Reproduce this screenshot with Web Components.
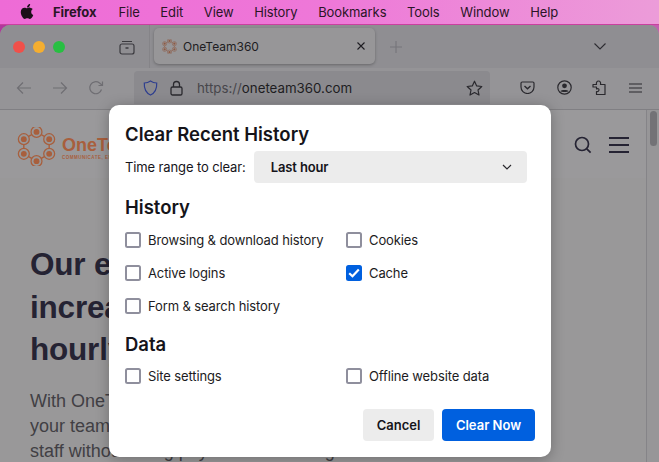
<!DOCTYPE html>
<html>
<head>
<meta charset="utf-8">
<title>Clear Recent History</title>
<style>
html, body { margin: 0; height: 100%; overflow: hidden; }
body {
    width: 659px; height: 462px;
    display: flex; flex-direction: column;
    font-family: Inter, "Liberation Sans", sans-serif;
    background: linear-gradient(90deg, #b0389c, #c25fb0);
}
</style>
</head>
<body>
<mac-menubar></mac-menubar>
<browser-window>
    <tab-strip></tab-strip>
    <nav-toolbar></nav-toolbar>
    <page-view></page-view>
    <history-dialog></history-dialog>
</browser-window>

<script>
const hexLogo = (size, color) => `
    <svg width="${size}" height="${size}" viewBox="0 0 40 40" fill="none">
        <path d="M20 5 L33 12.5 V27.5 L20 35 L7 27.5 V12.5 Z" stroke="${color}" stroke-width="1.4"/>
        ${[[20, 5], [33, 12.5], [33, 27.5], [20, 35], [7, 27.5], [7, 12.5]].map(([x, y]) => `
            <circle cx="${x}" cy="${y}" r="5.6" fill="#999899" stroke="${color}" stroke-width="1.3"/>
            <circle cx="${x}" cy="${y}" r="3" fill="${color}"/>`).join('')}
    </svg>`

class MacMenubar extends HTMLElement {
    constructor() {
        super()
        this.attachShadow({ mode: 'open' })
        this.shadowRoot.innerHTML = `
            <style>
                :host {
                    display: flex; align-items: center; flex: none;
                    height: 25px; padding-left: 20px; box-sizing: border-box;
                    border-bottom: 1px solid #c9409f;
                    background: linear-gradient(90deg, #ee6bd6, #ee78d8 50%, #ec9cd9);
                    color: #2a1526; font-size: 13px; letter-spacing: -.08px;
                }
                svg { width: 14px; height: 17px; margin-right: 19px; margin-top: -2px; }
                b { font-weight: 700; margin-right: 22px; }
                span { margin-right: 20.6px; }
            </style>
            <svg viewBox="0 0 384 512"><path fill="#1a0f18" d="M318.7 268.7c-.2-36.7 16.4-64.4 50-84.8-18.8-26.9-47.2-41.7-84.7-44.6-35.5-2.8-74.3 20.7-88.5 20.7-15 0-49.4-19.7-76.4-19.7C63.3 141.2 4 184.8 4 273.5q0 39.3 14.4 81.2c12.8 36.7 59 126.7 107.2 125.2 25.2-.6 43-17.9 75.8-17.9 31.8 0 48.3 17.9 76.4 17.9 48.6-.7 90.4-82.5 102.6-119.3-65.2-30.7-61.7-90-61.7-91.9zm-56.6-164.2c27.3-32.4 24.8-61.9 24-72.5-24.1 1.4-52 16.4-67.9 34.9-17.5 19.8-27.8 44.3-25.6 71.9 26.1 2 49.9-11.4 69.5-34.3z"/></svg>
            <b>Firefox</b><span>File</span><span>Edit</span><span>View</span><span>History</span><span>Bookmarks</span><span>Tools</span><span>Window</span><span>Help</span>
        `
    }
}

class BrowserWindow extends HTMLElement {
    constructor() {
        super()
        this.attachShadow({ mode: 'open' })
        this.shadowRoot.innerHTML = `
            <style>
                :host {
                    display: flex; flex-direction: column; flex: 1; min-height: 0;
                    position: relative; overflow: hidden;
                    border-radius: 10px 10px 0 0;
                    background: #999899;
                }
            </style>
            <slot></slot>
        `
    }
}

class TabStrip extends HTMLElement {
    constructor() {
        super()
        this.attachShadow({ mode: 'open' })
        this.shadowRoot.innerHTML = `
            <style>
                :host {
                    display: flex; align-items: center; flex: none;
                    height: 43px; padding: 0 0 0 13px; box-sizing: border-box;
                    background: #8f8e92;
                }
                .light { width: 12px; height: 12px; border-radius: 50%; margin-right: 8px; }
                .red { background: #f0504a; }
                .amber { background: #f5ae30; }
                .green { background: #28bf42; margin-right: 0; }
                .view { width: 16px; height: 16px; margin: 0 14px 0 54px; }
                .rule { width: 1px; height: 43px; background: #858488; margin-right: 4px; }
                .tab {
                    display: flex; align-items: center; box-sizing: border-box;
                    width: 221px; height: 36px; padding: 0 9px 0 8px; margin-top: -1px;
                    border-radius: 5px; background: #979698;
                    box-shadow: 0 1px 3px rgba(0,0,0,.28);
                    font-size: 12px; color: #1e1d22;
                }
                .tab svg.logo { margin-right: 6px; }
                .tab span { flex: 1; }
                .plus { margin-left: 14px; }
                .chev { margin-left: 190px; }
            </style>
            <div class="light red"></div>
            <div class="light amber"></div>
            <div class="light green"></div>
            <svg class="view" viewBox="0 0 16 16" fill="none" stroke="#3a393e" stroke-width="1.2">
                <rect x="1" y="5" width="14" height="10" rx="2"/>
                <path d="M3 2.5h10"/><path d="M6.5 9h3" stroke-width="1.4"/>
            </svg>
            <div class="rule"></div>
            <div class="tab">
                ${hexLogo(15, '#8f5a42').replace('<svg', '<svg class="logo"').replaceAll('#999899', '#979698')}
                <span>OneTeam360</span>
                <svg width="10" height="10" viewBox="0 0 10 10" stroke="#1e1d22" stroke-width="1.1"><path d="M1.5 1.5l7 7M8.5 1.5l-7 7"/></svg>
            </div>
            <svg class="plus" width="14" height="14" viewBox="0 0 14 14" stroke="#76757a" stroke-width="1.1"><path d="M7 1v12M1 7h12"/></svg>
            <svg class="chev" width="14" height="9" viewBox="0 0 14 9" fill="none" stroke="#2e2d32" stroke-width="1.1"><path d="M1.5 1.5L7 7l5.5-5.5"/></svg>
        `
    }
}

class NavToolbar extends HTMLElement {
    constructor() {
        super()
        this.attachShadow({ mode: 'open' })
        this.shadowRoot.innerHTML = `
            <style>
                :host {
                    display: flex; align-items: center; flex: none;
                    height: 42px; padding: 0 0 2px 16px; box-sizing: border-box;
                    background: #959497;
                    border-bottom: 1px solid #807f83;
                }
                .dim { margin-right: 20px; flex: none; }
                .url {
                    display: flex; align-items: center; box-sizing: border-box;
                    width: 356px; height: 33px; margin: 0 30px 0 6px; padding: 0 7px 0 9px;
                    border-radius: 4px 4px 0 0; background: #8b8a8e;
                    font-size: 13.3px; color: #1e1d22;
                }
                .shield { margin-right: 12px; }
                .lock { margin-right: 14px; }
                .host { flex: 1; white-space: nowrap; }
                .host i { font-style: normal; color: #47464b; }
                .act { flex: none; }
            </style>
            <svg class="dim" width="16" height="14" viewBox="0 0 16 14" fill="none" stroke="#6f6e73" stroke-width="1.2"><path d="M15 7H1.5M7 1.5L1.5 7 7 12.5"/></svg>
            <svg class="dim" width="16" height="14" viewBox="0 0 16 14" fill="none" stroke="#6f6e73" stroke-width="1.2"><path d="M1 7h13.5M9 1.5L14.5 7 9 12.5"/></svg>
            <svg class="dim" style="margin-right:24px" width="16" height="16" viewBox="0 0 16 16" fill="none" stroke="#6f6e73" stroke-width="1.2"><path d="M13.5 9.5A6 6 0 1 1 11.5 3l2.5 2"/><path d="M14.5 1.5v4h-4" /></svg>
            <div class="url">
                <svg class="shield" width="15" height="16" viewBox="0 0 15 16" fill="none" stroke="#2f3f8f" stroke-width="1.2"><path d="M7.5 1C5.5 2.5 3.5 3 1.3 3c-.3 5.500 1.500 9.800 6.200 12 4.700-2.200 6.500-6.500 6.200-12C11.500 3 9.500 2.500 7.500 1z"/></svg>
                <svg class="lock" width="13" height="16" viewBox="0 0 13 16" fill="none" stroke="#2a292e" stroke-width="1.3"><rect x="1" y="7" width="11" height="8" rx="1.6"/><path d="M3.500 7V4.500a3 3 0 0 1 6 0V7"/></svg>
                <span class="host"><i>https://</i>oneteam360.com</span>
                <svg width="17" height="16" viewBox="0 0 17 16" fill="none" stroke="#2a292e" stroke-width="1.2" stroke-linejoin="round"><path d="M8.500 1.200l2.200 4.700 5.100.6-3.800 3.500 1 5-4.500-2.500-4.500 2.500 1-5L1.200 6.500l5.100-.6z"/></svg>
            </div>
            <svg class="act" style="margin-right:22px" width="15" height="13" viewBox="0 0 15 13" fill="none" stroke="#2a292e" stroke-width="1.2"><path d="M2.200 1h10.600c.7 0 1.200.5 1.200 1.200V6A6.500 6.500 0 0 1 1 6V2.200C1 1.500 1.500 1 2.200 1z"/><path d="M4.500 5l3 2.800 3-2.800" stroke-width="1.400"/></svg>
            <svg class="act" style="margin-right:20px" width="15" height="15" viewBox="0 0 15 15" fill="none"><circle cx="7.500" cy="7.500" r="6.700" stroke="#2a292e" stroke-width="1.200"/><circle cx="7.500" cy="5.800" r="2.400" fill="#2a292e"/><path d="M3.300 11.200c1-1.700 7.400-1.700 8.400 0-1 .9-7.400.9-8.400 0z" fill="#2a292e"/></svg>
            <svg class="act" style="margin-right:23px" width="14" height="16" viewBox="0 0 14 16" fill="none" stroke="#2a292e" stroke-width="1.200" stroke-linejoin="round"><path d="M1 4.500h3.500C4 2.500 5 1 6.500 1S9 2.500 8.500 4.500H13v10H4.500v-3c1.500.3 2.500-.5 2.500-1.700S6 8.500 4.500 9V7H1z"/></svg>
            <svg class="act" width="13" height="10" viewBox="0 0 13 10" stroke="#2a292e" stroke-width="1.100"><path d="M0 1h13M0 5h13M0 9h13"/></svg>
        `
    }
}

class PageView extends HTMLElement {
    constructor() {
        super()
        this.attachShadow({ mode: 'open' })
        this.shadowRoot.innerHTML = `
            <style>
                :host {
                    display: flex; flex: 1; min-height: 0; overflow: hidden;
                    font-family: "Liberation Sans", sans-serif;
                    background: #999899;
                }
                main { flex: 1; min-width: 0; }
                header {
                    display: flex; align-items: center; box-sizing: border-box;
                    height: 68px; padding: 2px 17px 0 16.5px;
                    background: #9a999b;
                }
                .spacer { flex: 1; }
                .brand {
                    display: flex; align-items: center; gap: 6.500px;
                    width: 92.500px; overflow: hidden; color: #a85f3d;
                }
                .brand svg { flex: none; margin-top: 3px; }
                .words { margin-top: 6px; white-space: nowrap; }
                .name { font-size: 18px; font-weight: 700; line-height: 20px; }
                .tag { font-size: 4.500px; letter-spacing: .5px; line-height: 6px; font-weight: 700; }
                .search { margin-right: 17px; }
                section { padding: 65px 0 0 30px; color: #252333; }
                h1 { margin: 0 0 18px; font-size: 31.5px; line-height: 42.500px; font-weight: 700; letter-spacing: -.2px; white-space: nowrap; }
                p { margin: 0; font-size: 18px; line-height: 25.300px; color: #413f44; white-space: nowrap; }
                aside {
                    flex: none; width: 13px; box-sizing: border-box; padding: 1px 2px 0 3px;
                    border-left: 1px solid #858488; background: #979698;
                }
                aside div { height: 35px; border-radius: 4px; background: #737276; }
            </style>
            <main>
                <header>
                    <div class="brand">
                        ${hexLogo(39, '#a85f3d')}
                        <div class="words">
                            <div class="name">OneTeam</div>
                            <div class="tag">COMMUNICATE, ENGAGE</div>
                        </div>
                    </div>
                    <div class="spacer"></div>
                    <svg class="search" width="18" height="18" viewBox="0 0 18 18" fill="none" stroke="#252333" stroke-width="1.700"><circle cx="8" cy="8" r="6.500"/><path d="M12.800 12.800l3.800 3.800"/></svg>
                    <svg width="20" height="16" viewBox="0 0 20 16" stroke="#252333" stroke-width="2"><path d="M0 1h20M0 8h20M0 15h20"/></svg>
                </header>
                <section>
                    <h1>Our e<br>increa<br>hourly</h1>
                    <p>With OneT<br>your team<br>staff without using payroll and tracking</p>
                </section>
            </main>
            <aside><div></div></aside>
        `
    }
}

class CheckRow extends HTMLElement {
    constructor() {
        super()
        this.attachShadow({ mode: 'open' })
        this.shadowRoot.innerHTML = `
            <style>
                :host { display: flex; align-items: center; gap: 7px; height: 16px; font-size: 13px; color: #1c1b22; }
                .box {
                    width: 16px; height: 16px; box-sizing: border-box; flex: none;
                    border: 2px solid #8f8f9d; border-radius: 2.500px; background: #fff;
                }
                :host([checked]) .box {
                    display: flex; align-items: center; justify-content: center;
                    border: 0; background: #0060df;
                }
                svg { display: none; }
                :host([checked]) svg { display: block; }
            </style>
            <div class="box">
                <svg width="12" height="10" viewBox="0 0 12 10" fill="none" stroke="#fff" stroke-width="2.200"><path d="M1.200 5.200L4.500 8.300 10.800 1.500"/></svg>
            </div>
            <slot></slot>
        `
    }
}

class HistoryDialog extends HTMLElement {
    constructor() {
        super()
        this.attachShadow({ mode: 'open' })
        this.shadowRoot.innerHTML = `
            <style>
                :host {
                    position: absolute; left: 109px; top: 80px;
                    width: 442px; height: 352px; box-sizing: border-box;
                    display: flex; flex-direction: column;
                    padding: 18px 16px 16px;
                    border-radius: 10px; background: #fff;
                    box-shadow: 0 2px 14px rgba(0,0,0,.28);
                    color: #15141a; font-size: 13px; letter-spacing: -.12px;
                }
                h2 { margin: 0; font-size: 18.5px; line-height: 22px; font-weight: 600; letter-spacing: 0; }
                .range { display: flex; align-items: center; gap: 8px; margin-top: 6px; }
                .select {
                    display: flex; align-items: center; justify-content: space-between;
                    box-sizing: border-box; width: 273px; height: 32px; padding: 0 15px 0 17px;
                    border-radius: 4px; background: #ececec;
                    font-weight: 600;
                }
                .history { margin-top: 13px; }
                .data { margin-top: 19px; }
                .grid {
                    display: grid; grid-template-columns: 221px 1fr; row-gap: 17px;
                    margin-top: 14px;
                }
                .data + .grid { margin-top: 13px; }
                .buttons { display: flex; justify-content: flex-end; gap: 8px; margin-top: auto; }
                button {
                    height: 32px; border: 0; border-radius: 4px; padding: 0;
                    font: 600 13px Inter, "Liberation Sans", sans-serif;
                }
                .cancel { width: 71px; background: #ececec; color: #15141a; }
                .clear { width: 93px; background: #0060df; color: #fff; }
            </style>
            <h2>Clear Recent History</h2>
            <div class="range">
                <span>Time range to clear:</span>
                <div class="select">
                    <span>Last hour</span>
                    <svg width="10" height="6" viewBox="0 0 10 6" fill="none" stroke="#2a292e" stroke-width="1.200"><path d="M1 1l4 4 4-4"/></svg>
                </div>
            </div>
            <h2 class="history">History</h2>
            <div class="grid">
                <check-row>Browsing &amp; download history</check-row>
                <check-row>Cookies</check-row>
                <check-row>Active logins</check-row>
                <check-row checked>Cache</check-row>
                <check-row>Form &amp; search history</check-row>
            </div>
            <h2 class="data">Data</h2>
            <div class="grid">
                <check-row>Site settings</check-row>
                <check-row>Offline website data</check-row>
            </div>
            <div class="buttons">
                <button class="cancel">Cancel</button>
                <button class="clear">Clear Now</button>
            </div>
        `
    }
}

customElements.define('mac-menubar', MacMenubar)
customElements.define('browser-window', BrowserWindow)
customElements.define('tab-strip', TabStrip)
customElements.define('nav-toolbar', NavToolbar)
customElements.define('page-view', PageView)
customElements.define('check-row', CheckRow)
customElements.define('history-dialog', HistoryDialog)
</script>
</body>
</html>
